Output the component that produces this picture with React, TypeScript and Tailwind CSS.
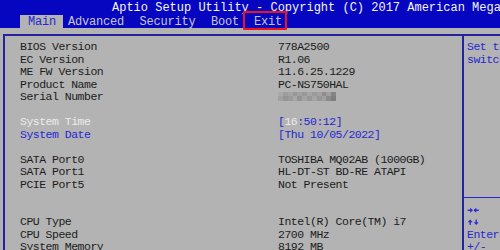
import React from "react";

type Row = {
  label?: string;
  value?: React.ReactNode;
  tone?: "selected" | "link";
};

const Blurred = () => {
  const cells = [
    "bg-[#a9a9a9]", "bg-[#9d9d9d]", "bg-[#a4a4a4]", "bg-[#979797]", "bg-[#a1a1a1]", "bg-[#999999]",
    "bg-[#a6a6a6]", "bg-[#9a9a9a]", "bg-[#a2a2a2]", "bg-[#8e8e8e]", "bg-[#9f9f9f]", "bg-[#858585]",
    "bg-[#a0a0a0]", "bg-[#959595]", "bg-[#9b9b9b]", "bg-[#a7a7a7]", "bg-[#939393]", "bg-[#a3a3a3]",
    "bg-[#989898]", "bg-[#a5a5a5]", "bg-[#969696]", "bg-[#a0a0a0]", "bg-[#8a8a8a]", "bg-[#7e7e7e]",
  ];
  return (
    <div className="grid grid-cols-12 w-[58px] h-[8.5px] mt-[1px]">
      {cells.map((c, i) => (
        <div key={i} className={c} />
      ))}
    </div>
  );
};

const TimeValue = () => (
  <span className="text-[#2626d2]">
    [<span className="text-[#ececec]">16</span>:50:12]
  </span>
);

const rows: Row[] = [
  { label: "BIOS Version", value: "778A2500" },
  { label: "EC Version", value: "R1.06" },
  { label: "ME FW Version", value: "11.6.25.1229" },
  { label: "Product Name", value: "PC-NS750HAL" },
  { label: "Serial Number", value: <Blurred /> },
  {},
  { label: "System Time", value: <TimeValue />, tone: "selected" },
  { label: "System Date", value: "[Thu 10/05/2022]", tone: "link" },
  {},
  { label: "SATA Port0", value: "TOSHIBA MQ02AB (1000GB)" },
  { label: "SATA Port1", value: "HL-DT-ST BD-RE ATAPI" },
  { label: "PCIE Port5", value: "Not Present" },
  {},
  {},
  { label: "CPU Type", value: "Intel(R) Core(TM) i7" },
  { label: "CPU Speed", value: "2700 MHz" },
  { label: "System Memory", value: "8192 MB" },
];

// little bold arrows used on the key help lines
const Arrow = ({ dir }: { dir: "left" | "right" | "up" | "down" }) => {
  const rot = { right: 0, down: 90, left: 180, up: 270 }[dir];
  return (
    <svg width="6.4" height="12.5" viewBox="0 0 6.4 12.5" className="block shrink-0">
      <g transform={`rotate(${rot} 3.2 6.25)`}>
        <rect x="0.5" y="5.6" width="2.9" height="1.3" fill="#2626d2" />
        <polygon points="3.1,3.8 6,6.25 3.1,8.7" fill="#2626d2" />
      </g>
    </svg>
  );
};

const tabs = ["Main", "Advanced", "Security", "Boot", "Exit"];

export default function App() {
  return (
    <div className="relative w-[500px] h-[250px] overflow-hidden bg-[#b3b3b3] font-['Liberation_Mono',monospace]">
      {/* Title bar + menu */}
      <div className="h-[28px] bg-[#0606c0]">
        <div className="h-[15px] pt-[2px] pl-[112px] text-[12px] leading-[12px] text-[#f4f4f4] whitespace-nowrap overflow-hidden">
          Aptio Setup Utility - Copyright (C) 2017 American Mega
        </div>
        <div className="flex h-[13px] pl-[20px] text-[12px] leading-[14px] tracking-[-0.2px] whitespace-nowrap">
          {tabs.map((t, i) =>
            i === 0 ? (
              <span key={t} className="bg-[#b3b3b3] text-[#2626d2] pl-[8px] pr-[7px]">
                {t}
              </span>
            ) : (
              <span
                key={t}
                className={`text-[#c6c6d2] ${i === 1 ? "pl-[5px]" : i === 4 ? "pl-[15px]" : "pl-[15.5px]"}`}
              >
                {t}
              </span>
            )
          )}
        </div>
      </div>

      {/* Body frame */}
      <div className="pt-[6px]">
        <div className="ml-[3px] flex border-t-2 border-l-2 border-[#24249e] h-[220px]">
          <div className="flex-1 pl-[15px] pt-[5px] text-[11.5px] tracking-[-0.5px] leading-[12.5px] text-[#1c1c1c] whitespace-nowrap">
            {rows.map((r, i) => (
              <div key={i} className="grid grid-cols-[258px_1fr] h-[12.5px]">
                <span
                  className={
                    r.tone === "selected"
                      ? "text-[#ececec]"
                      : r.tone === "link"
                      ? "text-[#2626d2]"
                      : ""
                  }
                >
                  {r.label}
                </span>
                <span className={r.tone === "link" ? "text-[#2626d2]" : ""}>{r.value}</span>
              </div>
            ))}
          </div>

          {/* Help panel */}
          <div className="w-[38px] border-l-2 border-[#24249e] pl-[3px] pt-[5px] text-[11.5px] tracking-[-0.5px] leading-[12.5px] text-[#2626d2] whitespace-nowrap overflow-hidden">
            <div className="h-[12.5px]">Set th</div>
            <div className="h-[12.5px]">switch</div>
            <div className="h-[125px]" />
            <div className="h-[12.5px] -ml-[3px] flex items-center">
              <div className="h-px w-full bg-[#2626d2]" />
            </div>
            <div className="h-[12.5px] flex">
              <Arrow dir="right" />
              <Arrow dir="left" />
            </div>
            <div className="h-[12.5px] flex">
              <Arrow dir="up" />
              <Arrow dir="down" />
            </div>
            <div className="h-[12.5px]">Enter</div>
            <div className="h-[12.5px]">+/-</div>
          </div>
        </div>
      </div>

      {/* red highlight around Exit */}
      <div className="absolute left-[243px] top-[11px] w-[44px] h-[19px] border-[2.5px] border-[#ec1420] rounded-[1px]" />
    </div>
  );
}
